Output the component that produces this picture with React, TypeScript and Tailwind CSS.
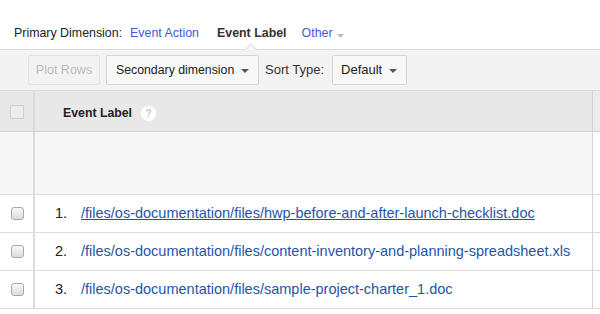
import React from "react";

const Caret = () => (
  <svg width="8" height="4" viewBox="0 0 8 4" className="inline-block">
    <path d="M0 0 L8 0 L4 4 Z" fill="#555" />
  </svg>
);

const RowCheck = () => (
  <div className="w-[13px] h-[13px] rounded-[3px] border border-[#a9a9a9] bg-gradient-to-b from-[#f8f8f8] to-[#dcdcdc]" />
);

const rows = [
  "/files/os-documentation/files/hwp-before-and-after-launch-checklist.doc",
  "/files/os-documentation/files/content-inventory-and-planning-spreadsheet.xls",
  "/files/os-documentation/files/sample-project-charter_1.doc",
];

export default function App() {
  return (
    <div
      className="w-[600px] h-[314px] bg-white overflow-hidden relative"
      style={{ fontFamily: '"Liberation Sans", Arial, sans-serif' }}
    >
      {/* primary dimension */}
      <div className="h-[49px] flex items-end pb-[6px] pl-[14px] text-[12.4px] text-[#222] whitespace-nowrap">
        <span>Primary Dimension:</span>
        <span className="ml-[8px] text-[#3b5bd0]">Event Action</span>
        <span className="ml-[18px] font-bold text-[#333]">Event Label</span>
        <span className="ml-[15px] text-[#3b5bd0]">Other</span>
        <span className="ml-[4px] mb-[5px]">
          <svg width="7" height="4" viewBox="0 0 7 4">
            <path d="M0 0 L7 0 L3.5 4 Z" fill="#bbb" />
          </svg>
        </span>
      </div>
      {/* toolbar */}
      <div className="relative h-[42px] bg-[#f3f3f3] border-t border-b border-[#dcdcdc] flex items-center pl-[28px] text-[13px] whitespace-nowrap">
        <div className="absolute left-[245px] top-[-7px]">
          <svg width="12" height="7" viewBox="0 0 12 7">
            <path d="M0 7 L6 1 L12 7" fill="#f3f3f3" stroke="#dcdcdc" strokeWidth="1" />
          </svg>
        </div>
        <div className="h-[30px] w-[72px] shrink-0 flex items-center justify-center border border-[#e2e2e2] rounded-[2px] bg-[#f3f3f3] text-[#bbb] text-[12.5px]">
          Plot Rows
        </div>
        <div className="ml-[6px] h-[30px] w-[153px] shrink-0 flex items-center justify-between pl-[9px] pr-[9px] border border-[#d4d4d4] rounded-[2px] bg-[#f8f8f8] text-[#222] text-[12.3px]">
          <span>Secondary dimension</span>
          <span className="mt-[1px] flex">
            <Caret />
          </span>
        </div>
        <span className="ml-[6px] text-[#333]">Sort Type:</span>
        <div className="ml-[8px] h-[30px] w-[75px] shrink-0 flex items-center justify-between pl-[8px] pr-[9px] border border-[#d4d4d4] rounded-[2px] bg-[#f8f8f8] text-[#222]">
          <span>Default</span>
          <span className="mt-[1px] flex">
            <Caret />
          </span>
        </div>
      </div>
      {/* table */}
      <div className="flex flex-col text-[13px]">
        <div className="flex h-[41px] bg-[#e8e8e8] border-b border-[#d2d2d2]">
          <div className="w-[35px] border-r-2 border-[#dcdcdc] flex items-center justify-center pt-[2px]">
            <div className="w-[14px] h-[14px] border border-[#d0d0d0] bg-[#ececec]" />
          </div>
          <div className="w-[558px] flex items-center pl-[28px] pt-[4px] border-r border-[#d4d4d4]">
            <span className="font-bold text-[#222] text-[12.3px]">Event Label</span>
            <span className="ml-[9px] w-[15px] h-[15px] rounded-full bg-white flex items-center justify-center text-[10px] font-bold text-[#c8c8c8]">
              ?
            </span>
          </div>
          <div className="flex-1 bg-[#ececec]" />
        </div>
        <div className="flex h-[63px] border-b border-[#dcdcdc]">
          <div className="w-[35px] bg-[#f7f7f7] border-r-2 border-[#dcdcdc]" />
          <div className="w-[558px] bg-[#f7f7f7] border-r border-[#d4d4d4]" />
          <div className="flex-1 bg-white" />
        </div>
        {rows.map((r, i) => (
          <div key={i} className="flex h-[38px] border-b border-[#dcdcdc]">
            <div className="w-[35px] border-r-2 border-[#dcdcdc] flex items-center pl-[11px]">
              <RowCheck />
            </div>
            <div className="w-[558px] flex items-center border-r border-[#d4d4d4] text-[14.5px] whitespace-nowrap">
              <span className="w-[46px] text-right pr-[14px] text-[#222]">{i + 1}.</span>
              <span className={"text-[#1f55a8] " + (i === 0 ? "underline" : "")}>{r}</span>
            </div>
            <div className="flex-1" />
          </div>
        ))}
      </div>
    </div>
  );
}
